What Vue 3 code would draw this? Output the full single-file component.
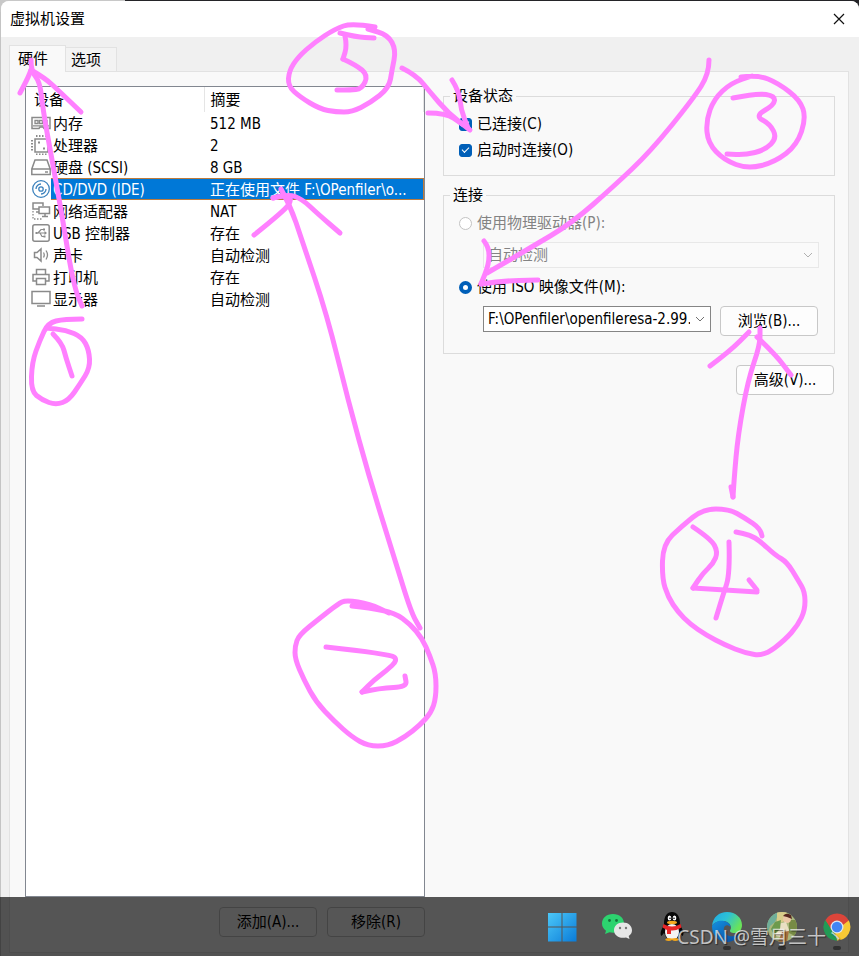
<script setup>
import { ref } from 'vue'

const devices = [
  { icon: 'memory', name: '内存', summary: '512 MB' },
  { icon: 'cpu', name: '处理器', summary: '2' },
  { icon: 'disk', name: '硬盘 (SCSI)', summary: '8 GB' },
  { icon: 'cd', name: 'CD/DVD (IDE)', summary: '正在使用文件 F:\\OPenfiler\\o...' },
  { icon: 'network', name: '网络适配器', summary: 'NAT' },
  { icon: 'usb', name: 'USB 控制器', summary: '存在' },
  { icon: 'sound', name: '声卡', summary: '自动检测' },
  { icon: 'printer', name: '打印机', summary: '存在' },
  { icon: 'display', name: '显示器', summary: '自动检测' }
]

const selected = ref(3)
const connected = ref(true)
const connectAtStart = ref(true)
const source = ref('iso')

// Hand-drawn pen strokes, each a list of points
const strokes = [
  // 1
  [[31, 60], [31, 71], [40, 82], [43, 110], [52, 160], [62, 215], [70, 265], [76, 292], [82, 306]],
  [[20, 93], [27, 80], [31, 70]],
  [[31, 70], [45, 78], [60, 92], [81, 112]],
  [[82, 319], [64, 319], [48, 323], [40, 340], [32, 362], [31, 391], [42, 400], [56, 405], [69, 400], [80, 384], [90, 368], [89, 350], [82, 337], [66, 330], [46, 328]],
  [[53, 334], [62, 343], [66, 358], [72, 376]],
  // 2
  [[281, 189], [290, 205], [302, 240], [327, 315], [348, 400], [370, 480], [395, 560], [411, 612], [420, 628]],
  [[254, 235], [284, 211], [292, 200], [286, 195], [273, 198]],
  [[273, 198], [288, 194], [302, 199], [318, 214], [340, 233]],
  [[352, 606], [370, 608], [395, 613], [410, 624], [422, 638], [430, 656], [436, 674], [436, 698], [431, 713], [420, 725], [405, 737], [388, 746], [368, 746], [352, 737], [334, 721], [316, 702], [304, 680], [295, 659], [295, 646], [299, 635], [320, 618], [338, 604], [346, 600], [370, 604], [389, 613]],
  [[326, 647], [390, 654], [398, 660], [386, 671], [374, 680], [362, 692]],
  [[362, 692], [380, 688], [407, 687], [405, 676]],
  // 3
  [[709, 60], [709, 74], [693, 99], [650, 152], [614, 186], [572, 223], [530, 248], [487, 273]],
  [[484, 241], [489, 247], [489, 264], [481, 284]],
  [[481, 284], [500, 281], [538, 280]],
  [[741, 77], [758, 75], [778, 83], [800, 100], [806, 118], [797, 145], [775, 162], [748, 169], [724, 160], [708, 143], [706, 121], [714, 99], [731, 83], [752, 76]],
  [[733, 98], [757, 93], [775, 96], [774, 105], [755, 116], [770, 124], [777, 138], [765, 150], [745, 155], [727, 154]],
  // 4
  [[733, 497], [734, 480], [738, 435], [748, 380], [760, 345], [760, 328]],
  [[731, 487], [733, 497]],
  [[710, 366], [730, 351], [749, 332]],
  [[757, 337], [775, 354], [791, 375]],
  [[762, 536], [761, 529], [745, 518], [729, 509], [703, 509], [682, 526], [663, 544], [662, 578], [668, 597], [678, 612], [690, 624], [706, 635], [725, 645], [745, 653], [764, 656], [785, 640], [798, 625], [805, 610], [805, 592], [798, 580], [787, 562], [775, 555], [760, 541], [750, 535], [736, 532]],
  [[693, 527], [711, 539], [718, 552], [713, 564], [703, 573], [693, 588]],
  [[693, 588], [757, 592]],
  [[757, 590], [749, 580]],
  [[729, 542], [730, 574], [723, 595], [716, 618]],
  // 5
  [[375, 27], [352, 23], [335, 29], [315, 42], [298, 57], [289, 71], [288, 86], [300, 97], [320, 109], [336, 112], [352, 112], [370, 103], [389, 88], [392, 70], [396, 50], [388, 35], [368, 29]],
  [[340, 33], [356, 37], [374, 38]],
  [[345, 36], [347, 46], [343, 59]],
  [[343, 59], [356, 65], [368, 75], [362, 89], [350, 90], [337, 90]],
  [[402, 68], [416, 75], [430, 92], [448, 113], [470, 130]],
  [[428, 113], [446, 113], [462, 124]],
  [[452, 80], [459, 91], [461, 110], [468, 128]]
]

// Smooth path running through the midpoints of the polyline
function toPath(points) {
  let d = `M${points[0][0]} ${points[0][1]}`
  for (let i = 1; i < points.length - 1; i++) {
    const [x, y] = points[i]
    const [nx, ny] = points[i + 1]
    d += ` Q${x} ${y} ${(x + nx) / 2} ${(y + ny) / 2}`
  }
  const last = points[points.length - 1]
  return `${d} L${last[0]} ${last[1]}`
}
</script>

<template>
  <div class="desktop">
    <main class="dialog">
      <header class="titlebar">
        <h1>虚拟机设置</h1>
        <button class="close" type="button" aria-label="关闭">
          <svg width="12" height="12" viewBox="0 0 12 12"><path d="M1 1L11 11M11 1L1 11" stroke="#111" stroke-width="1.2" fill="none" /></svg>
        </button>
      </header>

      <div class="tabs" role="tablist">
        <button class="tab active" type="button" role="tab" aria-selected="true">硬件</button>
        <button class="tab" type="button" role="tab" aria-selected="false">选项</button>
      </div>

      <section class="panel">
        <div class="left">
          <div class="list">
            <table>
              <colgroup><col class="col-name" /><col /></colgroup>
              <thead>
                <tr><th>设备</th><th>摘要</th></tr>
              </thead>
              <tbody>
                <tr v-for="(d, i) in devices" :key="d.name" :class="{ selected: i === selected }" @click="selected = i">
                  <td>
                    <div class="device">
                      <svg class="icon" viewBox="0 0 20 20" fill="none" stroke="#8a8a8a" stroke-width="1.5">
                        <g v-if="d.icon === 'memory'">
                          <path d="M1 4.5H19V15.5H13L12 14H9L8 15.5H1Z" />
                          <path d="M4 7.500H7V10.500H4ZM8.500 7.500H11.500V10.500H8.500ZM13 7.500H16V10.500H13Z" stroke-width="1.300" />
                          <path d="M2 12.800H18" stroke-width="1.300" />
                        </g>
                        <g v-else-if="d.icon === 'cpu'">
                          <rect x="4" y="4" width="13" height="13" />
                          <path d="M5 1H17M5 19.500H17M1 5V17M19.500 5V17" stroke-width="2" stroke-dasharray="1.500 1.500" />
                          <path d="M7 7.500H9M12 13.500H14" stroke-width="2" />
                        </g>
                        <g v-else-if="d.icon === 'disk'">
                          <path d="M4 3H16L19.200 12V17.500H.8V12ZM1 12H19M14 15H17" />
                        </g>
                        <g v-else-if="d.icon === 'cd'" stroke="#3c82bd" stroke-width="1.300">
                          <circle cx="10" cy="10" r="8.300" />
                          <circle cx="10" cy="10" r="2.200" />
                          <path d="M10 5A5 5 0 0 0 5 10M10 15A5 5 0 0 0 15 10" />
                        </g>
                        <g v-else-if="d.icon === 'network'">
                          <path d="M8 8H2V2H12V5M5 11H8" />
                          <path d="M8 6H18.500V12.500H8ZM11 15.500H17M14 13V15" />
                          <path d="M2 10V18H12" stroke-dasharray="1.500 1.500" stroke-width="1.300" />
                        </g>
                        <g v-else-if="d.icon === 'usb'">
                          <rect x="1.800" y="1.800" width="16.400" height="16.400" rx="2" />
                          <path d="M5 10H15M7 10L10 6.500H12M9 10L11 13.500H13" stroke-width="1.200" />
                          <path d="M4.500 10H6.500M12 6.500H14M12.500 13.500H14.500" stroke-width="2" />
                          <path d="M13.500 8L16 10L13.500 12Z" fill="#8a8a8a" stroke="none" />
                        </g>
                        <g v-else-if="d.icon === 'sound'">
                          <path d="M3.500 7.500H6L10 4V16L6 12.500H3.500Z" />
                          <path d="M12.500 7.500Q14 10 12.500 12.500M15 5.500Q18 10 15 14.500" stroke-width="1.300" />
                        </g>
                        <g v-else-if="d.icon === 'printer'">
                          <path d="M5.500 7V2.500H14.500V7M5.500 14H2V7.500H18V14H14.500M5.500 11.500H14.500V17.500H5.500Z" />
                        </g>
                        <g v-else>
                          <path d="M1 2.500H19V14.500H1ZM6 17H14" />
                        </g>
                      </svg>
                      <span class="name">{{ d.name }}</span>
                    </div>
                  </td>
                  <td class="summary">{{ d.summary }}</td>
                </tr>
              </tbody>
            </table>
          </div>
          <div class="actions">
            <button class="btn" type="button">添加(A)...</button>
            <button class="btn" type="button">移除(R)</button>
          </div>
        </div>

        <div class="right">
          <fieldset class="status">
            <legend>设备状态</legend>
            <label class="row"><input v-model="connected" type="checkbox" />已连接(C)</label>
            <label class="row"><input v-model="connectAtStart" type="checkbox" />启动时连接(O)</label>
          </fieldset>

          <fieldset class="connection">
            <legend>连接</legend>
            <label class="row muted"><input v-model="source" type="radio" value="physical" disabled />使用物理驱动器(P):</label>
            <div class="picker">
              <div class="combo muted">
                <select aria-label="物理驱动器" disabled><option>自动检测</option></select>
                <svg width="10" height="6" viewBox="0 0 10 6"><path d="M1 1L5 5L9 1" fill="none" stroke="currentColor" /></svg>
              </div>
            </div>
            <label class="row"><input v-model="source" type="radio" value="iso" />使用 ISO 映像文件(M):</label>
            <div class="picker">
              <div class="combo">
                <select aria-label="ISO 映像文件"><option>F:\OPenfiler\openfileresa-2.99.</option></select>
                <svg width="10" height="6" viewBox="0 0 10 6"><path d="M1 1L5 5L9 1" fill="none" stroke="currentColor" /></svg>
              </div>
              <button class="btn" type="button">浏览(B)...</button>
            </div>
          </fieldset>

          <button class="btn advanced" type="button">高级(V)...</button>
        </div>
      </section>
    </main>

    <nav class="taskbar" aria-label="任务栏">
      <svg class="app" viewBox="0 0 30 30">
        <defs>
          <linearGradient id="win" x1="0" y1="0" x2="1" y2="1" gradientUnits="objectBoundingBox"><stop offset="0" stop-color="#4cc8f8" /><stop offset="1" stop-color="#0a7bd8" /></linearGradient>
        </defs>
        <path d="M1 1H14.500V14.500H1ZM15.500 1H29.500V14.500H15.500ZM1 15.500H14.500V29.500H1ZM15.500 15.500H29.500V29.500H15.500Z" fill="url(#win)" />
      </svg>
      <svg class="app" viewBox="0 0 30 30">
        <path d="M11 2C4.500 2 0 6 0 11.500C0 14.500 1.500 17 4 18.800L3 22L7.500 20.200C15 22 22 18 22 11.500C22 6 17.500 2 11 2Z" fill="#2dd36f" />
        <path d="M21 10.500C15.500 10.500 12 14 12 18.200C12 23 17 27 24 25.400L27.500 27L26.700 24C29 22.500 30 20.500 30 18.200C30 14 26.500 10.500 21 10.500Z" fill="#e6e6e6" />
        <g fill="#16753c"><circle cx="7.500" cy="8.500" r="1.400" /><circle cx="14.500" cy="8.500" r="1.400" /></g>
        <g fill="#777"><circle cx="18" cy="16" r="1.200" /><circle cx="24" cy="16" r="1.200" /></g>
      </svg>
      <svg class="app" viewBox="0 0 30 30">
        <path d="M7 12C7 4 10 0 15 0S23 4 23 12L26 19Q27 23 25.500 24L23 21L20 27H10L7 21L4.500 24Q3 23 4 19Z" fill="#080808" />
        <ellipse cx="15" cy="20" rx="7" ry="8" fill="#f4f4f4" />
        <path d="M8 28Q9 25 15 26.500Q21 25 22 28Q18 30 15 28Q12 30 8 28Z" fill="#f0a51c" />
        <ellipse cx="12.500" cy="6" rx="1.800" ry="2.600" fill="#fff" /><ellipse cx="17.500" cy="6" rx="1.800" ry="2.600" fill="#fff" />
        <circle cx="13" cy="6.300" r=".8" /><circle cx="17" cy="6.300" r=".8" />
        <ellipse cx="15" cy="10.500" rx="5" ry="1.700" fill="#f5aa20" />
        <path d="M6.500 12Q15 17 23.500 12L24.500 15.500Q19 19 14 18.500V22H10V18L5.500 15.500Z" fill="#e82628" />
      </svg>
      <span class="running">
        <svg class="app" viewBox="0 0 30 30">
          <defs>
            <linearGradient id="edgeTop" x1="0" y1="0" x2="1" y2=".5"><stop offset="0" stop-color="#1fa9e5" /><stop offset=".5" stop-color="#2dc1d6" /><stop offset="1" stop-color="#69e35a" /></linearGradient>
            <linearGradient id="edgeLow" x1="0" y1="0" x2="1" y2="1"><stop offset="0" stop-color="#1391e2" /><stop offset="1" stop-color="#0a4a9c" /></linearGradient>
          </defs>
          <path d="M0 14C1 5 7 0 15 0C24 0 30 6 30 13C30 18 27 21 22.500 21C19 21 17 19.500 18.500 17.500C20 15 18 10 12 9C7 8.500 2 10 0 14Z" fill="url(#edgeTop)" />
          <path d="M0 14C3 9 8 8 12 9C16 10 18.500 12 18.500 15C14 11 11 15 12 19C13.500 24 20 26 27 22.500C24 27.500 20 30 15 30C6 30 0 23 0 14Z" fill="url(#edgeLow)" />
        </svg>
      </span>
      <span class="running">
        <svg class="app" viewBox="0 0 30 30">
          <clipPath id="avatar"><circle cx="15" cy="15" r="15" /></clipPath>
          <g clip-path="url(#avatar)">
            <rect width="30" height="30" fill="#a9b77d" />
            <path d="M0 0H12L8 10L3 14L0 24Z" fill="#6fae99" />
            <path d="M10 0H20L17 9L10 13Z" fill="#d9cd8a" />
            <path d="M22 8L30 8V25L22 21Z" fill="#778b45" />
            <circle cx="20" cy="7" r="4" fill="#ecc8a6" />
            <path d="M16 4Q19 0 24 3L25 7L20 5Z" fill="#572820" />
            <path d="M10 12L19 10L22 18L19 26L9 24L7 18Z" fill="#e9dfc3" />
            <path d="M8 10L14 8L13 17L7 23L4 17Z" fill="#6c9a4d" />
            <path d="M15 20L22 19L20 30H11Z" fill="#a87340" />
          </g>
        </svg>
      </span>
      <span class="running">
        <svg class="app" viewBox="0 0 30 30">
          <path d="M15 15L3.300 8.300A13.500 13.500 0 0 1 26.700 8.300Z" fill="#dc453a" />
          <path d="M15 15L26.700 8.300A13.500 13.500 0 0 1 15 28.500Z" fill="#f8c935" />
          <path d="M15 15L15 28.500A13.500 13.500 0 0 1 3.300 8.300Z" fill="#229b55" />
          <path d="M3.300 8.300H27L21 13L15 9L9.500 18Z" fill="#dc453a" />
          <path d="M21 18L15 28.500L12 20Z" fill="#f8c935" />
          <path d="M3.300 8.300L9.500 18L13 21L15 28.500A13.500 13.500 0 0 1 3.300 8.300Z" fill="#229b55" />
          <circle cx="15" cy="15" r="6.500" fill="#dfe6ef" /><circle cx="15" cy="15" r="5.200" fill="#4285f4" />
        </svg>
      </span>
    </nav>

    <svg class="pen" width="859" height="956" viewBox="0 0 859 956" aria-hidden="true">
      <path v-for="(s, i) in strokes" :key="i" :d="toPath(s)" />
    </svg>
    <span class="watermark">CSDN @雪月三十丶</span>
  </div>
</template>

<style>
body {
  margin: 0;
}
</style>

<style scoped>
.desktop {
  position: relative;
  box-sizing: border-box;
  display: flex;
  min-height: 100vh;
  padding: 1px 0 0 1px;
  overflow: hidden;
  background: linear-gradient(90deg, #c8c8c8 125px, #242428 125px) top / 100% 12px no-repeat, #c4c4c4;
  color: #000;
  font: 15px/20px "DejaVu Sans Condensed", "Noto Sans", "Noto Sans CJK SC", sans-serif;
}

button,
select {
  font: inherit;
  color: inherit;
}

.dialog {
  box-sizing: border-box;
  display: flex;
  flex: 1;
  flex-direction: column;
  min-width: 0;
  padding-bottom: 3px;
  overflow: hidden;
  border-radius: 8px 8px 0 0;
  background: #f0f0f0;
}

.titlebar {
  display: flex;
  align-items: center;
  justify-content: space-between;
  height: 36px;
  padding: 0 9px;
  background: #fff;
}

.titlebar h1 {
  margin: 0;
  font: inherit;
}

.close {
  display: flex;
  padding: 5px;
  border: 0;
  background: none;
}

.tabs {
  display: flex;
  align-items: flex-end;
  height: 34px;
  padding-left: 8px;
}

.tab {
  height: 24px;
  padding: 1px 15px 0 5px;
  border: 1px solid #e2e2e2;
  border-bottom: 0;
  border-left: 0;
  background: #f3f3f3;
}

.tab.active {
  z-index: 1;
  height: 27px;
  margin-bottom: -1px;
  padding: 0 17px 1px 8px;
  border-left: 1px solid #e2e2e2;
  background: #f9f9f9;
}

.panel {
  display: grid;
  flex: 1;
  grid-template-columns: minmax(0, 400px) minmax(0, 1fr);
  gap: 18px;
  margin: 0 10px 0 8px;
  padding: 14px 13px 15px 15px;
  border: 1px solid #e2e2e2;
  background: #f9f9f9;
}

.left {
  display: flex;
  flex-direction: column;
  gap: 10px;
}

.list {
  flex: 1;
  border: 1px solid #828790;
  background: #fff;
}

table {
  width: 100%;
  table-layout: fixed;
  border-collapse: collapse;
}

.col-name {
  width: 178px;
}

th {
  height: 25px;
  padding: 0 0 0 8px;
  border-right: 1px solid #e5e5e5;
  font-weight: normal;
  text-align: left;
}

th + th {
  padding-left: 6px;
}

td {
  height: 22px;
  padding: 0;
}

.summary {
  box-sizing: border-box;
  padding: 2px 0 0 6px;
  overflow: hidden;
  white-space: nowrap;
}

.device {
  display: flex;
  align-items: center;
  height: 22px;
}

.icon {
  flex: none;
  width: 20px;
  height: 20px;
  margin-left: 5px;
}

.name {
  box-sizing: border-box;
  flex: 1;
  height: 22px;
  padding: 2px 0 0 2px;
  white-space: nowrap;
}

.selected .name,
.selected .summary {
  background: #0078d7;
  color: #fff;
}

.selected .name {
  box-shadow: inset 0 1px #bd7b3c, inset 0 -1px #bd7b3c;
}

.selected .summary {
  box-shadow: inset 0 1px #bd7b3c, inset -1px -1px #bd7b3c;
}

.actions {
  display: flex;
  justify-content: flex-end;
  gap: 10px;
}

.btn {
  box-sizing: border-box;
  flex: none;
  width: 98px;
  height: 30px;
  padding: 0;
  border: 1px solid #c8c8c8;
  border-radius: 4px;
  background: #fdfdfd;
}

.right {
  display: flex;
  flex-direction: column;
}

fieldset {
  min-width: 0;
  margin: 0;
  padding: 5px 15px 12px;
  border: 1px solid #dcdcdc;
}

.connection {
  margin-top: 9px;
  padding-bottom: 17px;
}

legend {
  margin-left: -9px;
  padding: 0 3px;
}

.row {
  display: flex;
  align-items: center;
  gap: 5px;
  height: 26px;
}

.row input {
  appearance: none;
  box-sizing: border-box;
  width: 13px;
  height: 13px;
  margin: 0;
  border: 1px solid #858585;
  border-radius: 3px;
  background: #fff;
}

.row input[type="radio"] {
  border-radius: 50%;
}

.row input[type="radio"]:checked {
  border: 4px solid #005fb8;
}

.row input[type="radio"]:disabled {
  border-color: #c3c3c3;
}

.row input[type="checkbox"]:checked {
  display: grid;
  place-items: center;
  border-color: #005fb8;
  background: #005fb8;
}

.row input[type="checkbox"]:checked::before {
  width: 6px;
  height: 3px;
  margin-bottom: 2px;
  border: solid #fff;
  border-width: 0 0 1px 1px;
  content: "";
  transform: rotate(-45deg);
}

.muted {
  color: #838383;
}

.picker {
  display: flex;
  gap: 9px;
  margin: 6px 0 6px 24px;
}

.picker:last-child {
  margin-right: 1px;
  margin-bottom: 0;
}

.combo {
  display: grid;
  flex: 1;
  align-items: center;
  align-self: flex-start;
  min-width: 0;
}

.combo select {
  grid-area: 1 / 1;
  box-sizing: border-box;
  width: 100%;
  height: 26px;
  padding: 0 20px 0 4px;
  appearance: none;
  border: 1px solid #858585;
  border-radius: 0;
  background: #fff;
}

.combo select:disabled {
  border-color: #e8e8e8;
  background: #fafafa;
  opacity: 1;
}

.combo svg {
  grid-area: 1 / 1;
  justify-self: end;
  margin-right: 6px;
  color: #707070;
  pointer-events: none;
}

.combo.muted svg {
  color: #b0b0b0;
}

.advanced {
  align-self: flex-end;
  margin: 11px 1px 0 0;
}

.taskbar {
  position: absolute;
  right: 0;
  bottom: 0;
  left: 0;
  box-sizing: border-box;
  display: flex;
  justify-content: flex-end;
  gap: 25px;
  height: 59px;
  padding: 15px 7px 0;
  background: rgba(0, 0, 0, 0.66);
}

.app {
  display: block;
  width: 30px;
  height: 30px;
}

.running::after {
  display: block;
  width: 8px;
  height: 4px;
  margin: 4px auto 0;
  border-radius: 2px;
  background: #303030;
  content: "";
}

.pen {
  position: absolute;
  z-index: 2;
  top: 0;
  left: 0;
  fill: none;
  stroke: #ff80ff;
  stroke-width: 5;
  stroke-linecap: round;
  stroke-linejoin: round;
  pointer-events: none;
}

.watermark {
  position: absolute;
  right: 14px;
  bottom: 5px;
  color: rgba(255, 255, 255, 0.7);
  font: 19px/28px "Noto Sans", "Noto Sans CJK SC", sans-serif;
  text-shadow: 1px 1px 1px rgba(0, 0, 0, 0.5);
  white-space: nowrap;
}
</style>
